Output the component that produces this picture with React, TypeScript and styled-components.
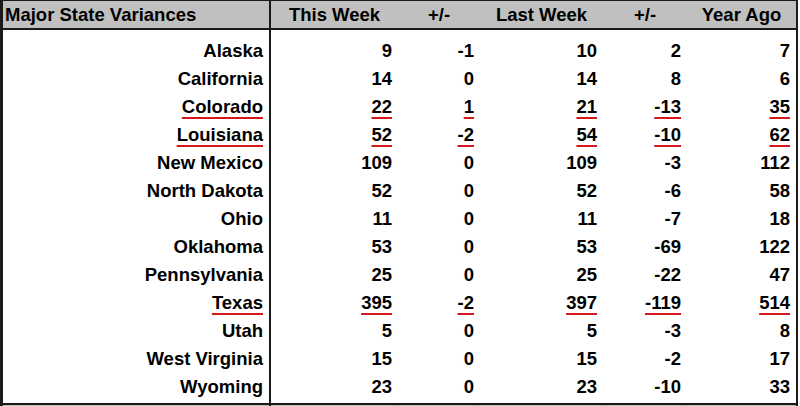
import styled, { createGlobalStyle } from "styled-components";

const GlobalStyle = createGlobalStyle`
  html, body {
    margin: 0;
    padding: 0;
    background: #ffffff;
  }
  body {
    font-family: "Liberation Sans", Arial, sans-serif;
    color: #000000;
  }
`;

// column widths, taken from the sheet (the first one holds the 2px divider)
const COLUMNS = "268px 127px 82px 123px 84px 109px";

const Sheet = styled.div`
  width: 798px;
  box-sizing: border-box;
  border-top: 1px solid #1a1a1a;
  border-left: 3px solid #1a1a1a;
  border-right: 2px solid #1a1a1a;
  font-weight: bold;
  font-size: 18.5px;
`;
const HeaderRow = styled.div`
  display: grid;
  grid-template-columns: ${COLUMNS};
  height: 27px;
  background: #c0c0c0;
  border-bottom: 2px solid #1a1a1a;
`;
const HeadCell = styled.div<{ $first?: boolean }>`
  display: flex;
  align-items: center;
  justify-content: ${(props) => (props.$first ? "flex-start" : "center")};
  padding-left: ${(props) => (props.$first ? "2px" : "0")};
  box-sizing: border-box;
  border-right: ${(props) => (props.$first ? "2px solid #1a1a1a" : "none")};
  white-space: nowrap;
`;
const Body = styled.div`
  padding: 7px 0 2px;
  border-bottom: 2px solid #1a1a1a;
  background: linear-gradient(
    to right,
    transparent 266px,
    #1a1a1a 266px,
    #1a1a1a 268px,
    transparent 268px
  );
`;
const Row = styled.div`
  display: grid;
  grid-template-columns: ${COLUMNS};
  height: 28px;
`;
const Cell = styled.div<{ $first?: boolean }>`
  display: flex;
  align-items: center;
  justify-content: flex-end;
  box-sizing: border-box;
  padding-right: ${(props) => (props.$first ? "7px" : "5px")};
  white-space: nowrap;
`;
const Mark = styled.span<{ $flag?: boolean }>`
  text-decoration: ${(props) => (props.$flag ? "underline" : "none")};
  text-decoration-color: #d81818;
  text-decoration-thickness: 2px;
  text-underline-offset: 4px;
  padding: 0 1px;
`;
const Footer = styled.div`
  display: grid;
  grid-template-columns: ${COLUMNS};
  height: 14px;
  background: #c0c0c0;
`;
const FooterCell = styled.div<{ $strong?: boolean }>`
  box-sizing: border-box;
  border-right: ${(props) =>
    props.$strong ? "2px solid #1a1a1a" : "1px solid #a8a8a8"};
`;

interface IState {
  name: string;
  values: number[];
  flag?: boolean;
}

const headers = ["This Week", "+/-", "Last Week", "+/-", "Year Ago"];

const states: IState[] = [
  { name: "Alaska", values: [9, -1, 10, 2, 7] },
  { name: "California", values: [14, 0, 14, 8, 6] },
  { name: "Colorado", values: [22, 1, 21, -13, 35], flag: true },
  { name: "Louisiana", values: [52, -2, 54, -10, 62], flag: true },
  { name: "New Mexico", values: [109, 0, 109, -3, 112] },
  { name: "North Dakota", values: [52, 0, 52, -6, 58] },
  { name: "Ohio", values: [11, 0, 11, -7, 18] },
  { name: "Oklahoma", values: [53, 0, 53, -69, 122] },
  { name: "Pennsylvania", values: [25, 0, 25, -22, 47] },
  { name: "Texas", values: [395, -2, 397, -119, 514], flag: true },
  { name: "Utah", values: [5, 0, 5, -3, 8] },
  { name: "West Virginia", values: [15, 0, 15, -2, 17] },
  { name: "Wyoming", values: [23, 0, 23, -10, 33] },
];

function App() {
  return (
    <>
      <GlobalStyle />
      <Sheet>
        <HeaderRow>
          <HeadCell $first>Major State Variances</HeadCell>
          {headers.map((h, i) => (
            <HeadCell key={i}>{h}</HeadCell>
          ))}
        </HeaderRow>
        <Body>
          {states.map((s) => (
            <Row key={s.name}>
              <Cell $first>
                <Mark $flag={s.flag}>{s.name}</Mark>
              </Cell>
              {s.values.map((v, i) => (
                <Cell key={i}>
                  <Mark $flag={s.flag}>{v}</Mark>
                </Cell>
              ))}
            </Row>
          ))}
        </Body>
        <Footer>
          <FooterCell $strong />
          <FooterCell />
          <FooterCell />
          <FooterCell />
          <FooterCell />
          <FooterCell />
        </Footer>
      </Sheet>
    </>
  );
}

export default App;
